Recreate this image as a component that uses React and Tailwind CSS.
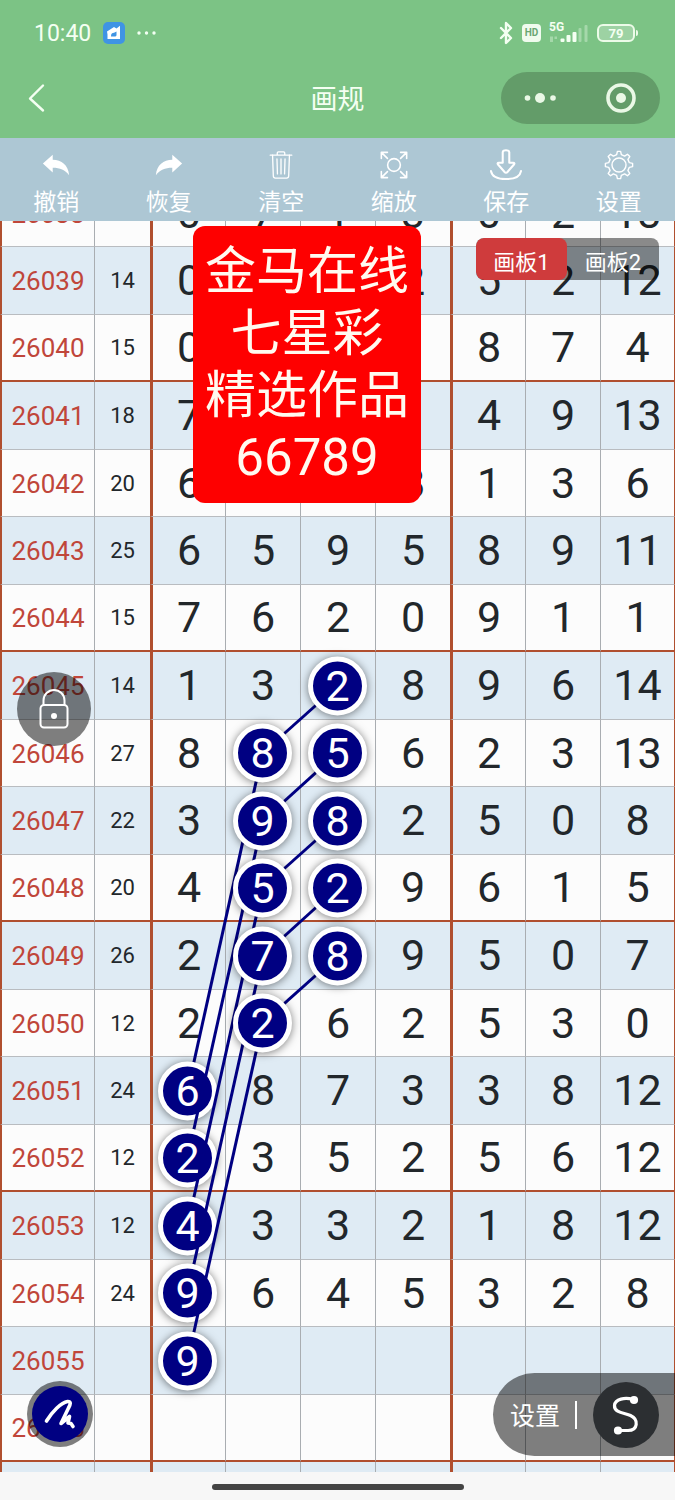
import { Bluetooth } from 'lucide-react';

const NAVY = '#000082';
const FIRST_ISSUE = 38;

const draws = [
  { id: 26038, sum: 17, nums: [0, 7, 1, 3, 0, 2, 13] },
  { id: 26039, sum: 14, nums: [0, null, null, 2, 5, 2, 12] },
  { id: 26040, sum: 15, nums: [0, null, null, null, 8, 7, 4] },
  { id: 26041, sum: 18, nums: [7, null, null, null, 4, 9, 13] },
  { id: 26042, sum: 20, nums: [6, null, null, 8, 1, 3, 6] },
  { id: 26043, sum: 25, nums: [6, 5, 9, 5, 8, 9, 11] },
  { id: 26044, sum: 15, nums: [7, 6, 2, 0, 9, 1, 1] },
  { id: 26045, sum: 14, nums: [1, 3, 2, 8, 9, 6, 14] },
  { id: 26046, sum: 27, nums: [8, 8, 5, 6, 2, 3, 13] },
  { id: 26047, sum: 22, nums: [3, 9, 8, 2, 5, 0, 8] },
  { id: 26048, sum: 20, nums: [4, 5, 2, 9, 6, 1, 5] },
  { id: 26049, sum: 26, nums: [2, 7, 8, 9, 5, 0, 7] },
  { id: 26050, sum: 12, nums: [2, 2, 6, 2, 5, 3, 0] },
  { id: 26051, sum: 24, nums: [6, 8, 7, 3, 3, 8, 12] },
  { id: 26052, sum: 12, nums: [2, 3, 5, 2, 5, 6, 12] },
  { id: 26053, sum: 12, nums: [4, 3, 3, 2, 1, 8, 12] },
  { id: 26054, sum: 24, nums: [9, 6, 4, 5, 3, 2, 8] },
  { id: 26055, sum: null, nums: [null, null, null, null, null, null, null] },
  { id: 26056, sum: null, nums: [null, null, null, null, null, null, null] },
  { id: null, sum: null, nums: [null, null, null, null, null, null, null] },
];

// each chain: [issue, column, digit]
const chains = [
  [[45, 2, 2], [46, 1, 8], [51, 0, 6]],
  [[46, 2, 5], [47, 1, 9], [52, 0, 2]],
  [[47, 2, 8], [48, 1, 5], [53, 0, 4]],
  [[48, 2, 2], [49, 1, 7], [54, 0, 9]],
  [[49, 2, 8], [50, 1, 2], [55, 0, 9]],
];

const marked = new Set(chains.flat().map(([issue, col]) => `${issue}-${col}`));

const colX = (col) => `${((col + 0.5) / 7) * 100}%`;
const rowY = (issue) => Math.round((issue - FIRST_ISSUE) * 67.5 + 33);

function StatusBar() {
  return (
    <div className="flex h-[66px] items-center justify-between pl-[34px] pr-[37px]">
      <div className="flex items-center gap-3">
        <span className="text-[23px] leading-none">10:40</span>
        <svg className="h-[22px] w-[22px]" viewBox="0 0 22 22">
          <rect width="22" height="22" rx="5" fill="#3f94e4" />
          <path d="M4 9.500 11 5l2.500 1.600L17 3.800V17H4.500v-4.500L4 9.500Z" fill="#fff" />
          <path d="M8 14c0-2 1.200-3.200 3-3.200l2.500-1.300v3.500c0 1-1 1.500-2 1.500H8Z" fill="#3f94e4" />
        </svg>
        <svg className="h-1 w-5" viewBox="0 0 20 4" fill="#f2fff2">
          <circle cx="2" cy="2" r="1.700" />
          <circle cx="9.500" cy="2" r="1.700" />
          <circle cx="17" cy="2" r="1.700" />
        </svg>
      </div>
      <div className="flex items-center gap-2">
        <Bluetooth className="-mr-1 h-6 w-6" strokeWidth={2.4} />
        <span className="flex h-[18px] w-[19px] items-center justify-center rounded bg-[#f0fbee] text-[10px] font-bold leading-none text-[#6aa672]">
          HD
        </span>
        <div className="relative h-5 w-[40px]">
          <span className="absolute left-0 top-[-2px] text-[12px] font-bold leading-none">5G</span>
          <svg className="h-5 w-full" viewBox="0 0 40 20" fill="#f4fff2">
            <path d="M1 13.500h3V19H1zM5.500 13.500h2.500V16H5.500z" opacity=".35" />
            <rect x="11.500" y="15.500" width="4" height="3.500" rx="1" />
            <rect x="17.500" y="12" width="4" height="7" rx="1" />
            <rect x="23.500" y="9" width="4" height="10" rx="1" />
            <rect x="29.500" y="5" width="3" height="14" rx="1" opacity=".35" />
            <rect x="35.500" y="2" width="3" height="17" rx="1" opacity=".35" />
          </svg>
        </div>
        <div className="flex items-center gap-px">
          <span className="flex h-[18px] w-[38px] items-center justify-center rounded-md border-2 border-[#ecfbe8] bg-white/25 text-[13px] font-bold leading-none">
            79
          </span>
          <span className="h-[6px] w-[2px] rounded-r bg-[#ecfbe8]" />
        </div>
      </div>
    </div>
  );
}

function NavBar() {
  return (
    <div className="grid h-[64px] grid-cols-3 items-center px-[15px]">
      <button type="button" aria-label="返回" className="w-fit pl-[10px]">
        <svg className="h-8 w-6" viewBox="0 0 24 32" fill="none" stroke="currentColor" strokeWidth="2.400" strokeLinecap="round" strokeLinejoin="round">
          <path d="M18 3.500 5 16.500l13 12" />
        </svg>
      </button>
      <h1 className="pt-1 text-center text-[27px] leading-none">画规</h1>
      <div className="flex h-[52px] w-[159px] items-center justify-between justify-self-end rounded-full bg-[#639c69] px-[23px] text-[#eaf8e6]">
        <button type="button" aria-label="更多">
          <svg className="h-8 w-8" viewBox="0 0 32 32" fill="currentColor">
            <circle cx="3.500" cy="16" r="2.800" />
            <circle cx="16" cy="16" r="5" />
            <circle cx="29" cy="16" r="2.800" />
          </svg>
        </button>
        <button type="button" aria-label="关闭">
          <svg className="h-8 w-8" viewBox="0 0 32 32">
            <circle cx="16" cy="16" r="13" fill="none" stroke="currentColor" strokeWidth="3.600" />
            <circle cx="16" cy="16" r="5" fill="currentColor" />
          </svg>
        </button>
      </div>
    </div>
  );
}

function UndoIcon() {
  return <path d="M2 14.500 12.500 5v5.500c9.500.3 16.500 5.500 17.500 16.500-4.500-6-9.500-8-17.500-8v5L2 14.500Z" fill="currentColor" stroke="none" />;
}

function RedoIcon() {
  return <path d="M30 14.500 19.500 5v5.500C10 10.800 3 16 2 27c4.500-6 9.500-8 17.500-8v5L30 14.500Z" fill="currentColor" stroke="none" />;
}

function TrashIcon() {
  return (
    <g strokeWidth="1.400">
      <path d="M4.500 5.500h23M12 5.500V3.200c0-.8.500-1.200 1.200-1.200h5.600c.7 0 1.200.4 1.200 1.200v2.300" />
      <path d="m7 5.500.8 22.300c.1 1.500.8 2.200 2.200 2.200h12c1.400 0 2.100-.7 2.200-2.200L25 5.500" />
      <path d="m11.700 9.500.5 16M16 9.500v16M20.300 9.500l-.5 16" />
    </g>
  );
}

function ScaleIcon() {
  return (
    <g strokeWidth="1.700">
      <circle cx="16" cy="16" r="6.800" />
      <path d="M2.500 9V2.500H9M2.500 2.500 9 9M23 2.500h6.500V9M29.500 2.500 23 9M29.500 23v6.500H23M29.500 29.500 23 23M9 29.500H2.500V23M2.500 29.500 9 23" />
    </g>
  );
}

function SaveIcon() {
  return (
    <g strokeWidth="2.200">
      <path d="M12.500 2.500c0-3 7-3 7 0v11h4.200c1.400 0 1.600 1 .8 2l-7 8c-.8 1-2.200 1-3 0l-7-8c-.8-1-.6-2 .8-2h4.200v-11Z" />
      <path d="M0 22.500c1 6 6 8.500 16 8.500s15-2.500 16-8.500" />
    </g>
  );
}

function GearIcon() {
  return (
    <g strokeWidth="1.500">
      <circle cx="16" cy="16" r="7.500" />
      <path d="M13.500 5 14.300 1.500h3.400L18.500 5l3.500 1.500 3-2 2.500 2.500-2 3L27 13.500l3.500.8v3.400L27 18.500 25.500 22l2 3-2.500 2.500-3-2L18.500 27l-.8 3.500h-3.400L13.500 27 10 25.500l-3 2L4.500 25l2-3L5 18.500l-3.500-.8v-3.400L5 13.500 6.500 10l-2-3L7 4.500l3 2Z" />
    </g>
  );
}

const tools = [
  { label: '撤销', Icon: UndoIcon },
  { label: '恢复', Icon: RedoIcon },
  { label: '清空', Icon: TrashIcon },
  { label: '缩放', Icon: ScaleIcon },
  { label: '保存', Icon: SaveIcon },
  { label: '设置', Icon: GearIcon },
];

function Toolbar() {
  return (
    <div className="grid h-[83px] shrink-0 grid-cols-6 bg-[#adc7d4] text-white">
      {tools.map(({ label, Icon }) => (
        <button key={label} type="button" className="flex flex-col items-center gap-[9px] pt-3">
          <svg
            className="h-[30px] w-[30px] overflow-visible"
            viewBox="0 0 32 32"
            fill="none"
            stroke="currentColor"
            strokeLinecap="round"
            strokeLinejoin="round"
          >
            <Icon />
          </svg>
          <span className="text-[23px] leading-[28px]">{label}</span>
        </button>
      ))}
    </div>
  );
}

function DrawTable() {
  return (
    <table className="w-full table-fixed border-separate border-spacing-0 text-center leading-none text-[#22272b]">
      <colgroup>
        <col className="w-[94px]" />
        <col className="w-[56px]" />
        <col span={7} />
      </colgroup>
      <tbody>
        {draws.map(({ sum, nums, id }, row) => {
          const issue = FIRST_ISSUE + row;
          const line = issue % 4 === 0 ? 'border-b-2 border-b-[#b04f2f]' : 'border-b border-b-[#b9bcc0]';

          return (
            <tr key={issue} className={issue % 2 ? 'h-[68px] bg-[#dfebf4]' : 'h-[67px] bg-[#fcfcfc]'}>
              <td className={`border-l-2 border-l-[#b04f2f] p-0 pt-px text-[26px] text-[#c0463a] ${line}`}>{id}</td>
              <td className={`border-l border-l-[#a9adb1] p-0 pt-px text-[22px] ${line}`}>{sum}</td>
              {nums.map((n, col) => (
                <td
                  key={col}
                  className={`p-0 text-[43px] ${line}
                    ${col === 0 || col === 4 ? 'border-l-[3px] border-l-[#b04f2f]' : 'border-l border-l-[#a9adb1]'}
                    ${col === 6 ? 'border-r border-r-[#b04f2f]' : ''}`}
                >
                  {marked.has(`${issue}-${col}`) ? null : n}
                </td>
              ))}
            </tr>
          );
        })}
      </tbody>
    </table>
  );
}

// Each chain is painted over the ones before it
function ChainOverlay() {
  return (
    <div className="pointer-events-none absolute inset-y-0 left-[150px] right-0">
      <svg className="h-full w-full">
        {chains.map((chain, i) => (
          <g key={i}>
            {chain.slice(1).map(([issue, col], j) => (
              <line
                key={issue}
                x1={colX(chain[j][1])}
                y1={rowY(chain[j][0])}
                x2={colX(col)}
                y2={rowY(issue)}
                stroke={NAVY}
                strokeWidth="3"
              />
            ))}
            {chain.map(([issue, col, digit]) => (
              <g key={issue}>
                <circle
                  cx={colX(col)}
                  cy={rowY(issue)}
                  r="27"
                  fill={NAVY}
                  stroke="#fff"
                  strokeWidth="5"
                  className="drop-shadow-[0_1px_4px_rgba(0,0,0,0.5)]"
                />
                <text x={colX(col)} y={rowY(issue) + 15} textAnchor="middle" fill="#fff" className="text-[43px]">
                  {digit}
                </text>
              </g>
            ))}
          </g>
        ))}
      </svg>
    </div>
  );
}

export default function App() {
  return (
    <div className="flex h-screen w-full flex-col overflow-hidden bg-[#f7f7f7] font-[Roboto,'Noto_Sans_CJK_SC',sans-serif]">
      <header className="h-[138px] shrink-0 bg-[#7cc385] text-[#f4fff2]">
        <StatusBar />
        <NavBar />
      </header>

      <Toolbar />

      <main className="relative flex-1 overflow-hidden">
        {/* Board, scrolled part way into its first row */}
        <div className="relative -mt-[41px]">
          <DrawTable />
          <ChainOverlay />
        </div>

        {/* Banner */}
        <div className="absolute left-[193px] top-[5px] rounded-xl bg-[#fe0000] px-3 pb-[14px] pt-[15px] text-center text-[51px] leading-[62px] text-[#fffaf0]">
          <p>金马在线</p>
          <p>七星彩</p>
          <p>精选作品</p>
          <p>66789</p>
        </div>

        {/* Board switch */}
        <div className="absolute right-4 top-[17px] flex h-[42px] overflow-hidden rounded-lg bg-black/45 text-[22px] leading-none text-white">
          <button type="button" className="w-[91px] rounded-lg bg-[#cf3b3c] pt-2">画板1</button>
          <button type="button" className="w-[92px] pt-2">画板2</button>
        </div>

        {/* Lock */}
        <button type="button" aria-label="锁定" className="absolute left-[17px] top-[451px] flex h-[74px] w-[74px] items-center justify-center rounded-full bg-black/50">
          <svg className="h-10 w-8" viewBox="0 0 32 40" fill="none" stroke="#fff" strokeWidth="2">
            <rect x="2.500" y="16" width="27" height="22.500" rx="3.500" />
            <path d="M5.500 16v-4.500a10.500 10.500 0 0 1 21 0V16" />
            <circle cx="16" cy="27" r="3" fill="#fff" stroke="none" />
          </svg>
        </button>

        {/* Pen */}
        <button type="button" aria-label="画笔" className="absolute bottom-[25px] left-[27px] flex h-[66px] w-[66px] items-center justify-center rounded-full bg-black/50">
          <span className="flex h-[56px] w-[56px] items-center justify-center rounded-full bg-[#000082]">
            <svg className="h-8 w-8" viewBox="0 0 32 32" fill="none" stroke="#fff" strokeWidth="3.600" strokeLinecap="round" strokeLinejoin="round">
              <path d="M2.500 23C8 14 17 4.500 23.500 3.500c4-.3 3 3 1 6.500L17 25.500l8.500-7-1.500 6.500 3 .5 2 3" />
            </svg>
          </span>
        </button>

        {/* Line settings */}
        <div className="absolute bottom-4 right-0 flex h-[83px] items-center rounded-l-full bg-black/50 pl-[17px] pr-4 text-white">
          <button type="button" className="pt-1 text-[25px] leading-none">设置</button>
          <span className="ml-[15px] mr-4 h-7 w-[2px] bg-white" />
          <button type="button" aria-label="曲线" className="flex h-[66px] w-[66px] items-center justify-center rounded-full bg-[#2c2f32]">
            <svg className="h-10 w-8" viewBox="0 0 32 40" fill="none" stroke="#fff" strokeWidth="3.200" strokeLinecap="round">
              <path d="M23 4.500C15 2 5 4 4.500 10.500 4 18 15 18 20.500 20.500 29 24.500 28 35.500 18 35.500H8" />
              <circle cx="24" cy="5" r="2.500" fill="#fff" />
              <circle cx="8" cy="35.500" r="2.500" fill="#fff" />
            </svg>
          </button>
        </div>
      </main>

      <footer className="flex h-[28px] shrink-0 justify-center pt-3">
        <div className="h-[6px] w-[252px] rounded-full bg-[#444]" />
      </footer>
    </div>
  );
}
